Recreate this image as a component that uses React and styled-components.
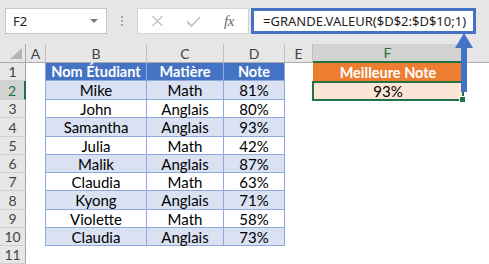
import React from "react";
import styled, { createGlobalStyle } from "styled-components";

const GlobalStyle = createGlobalStyle`
  html, body { margin: 0; padding: 0; background: #fff; }
  body { overflow: hidden; }
`;

const GREEN = "#217346";
const BLUE = "#4472c4";
const GRID_BLUE = "#8ea9db";

const Page = styled.div`
  position: relative;
  width: 489px;
  height: 264px;
  overflow: hidden;
  display: flex;
  flex-direction: column;
  background: #fff;
`;

/* ---------- formula bar ---------- */

const FormulaBar = styled.div`
  flex: none;
  box-sizing: border-box;
  height: 44px;
  background: #e6e6e6;
  display: flex;
  align-items: flex-start;
  padding: 8px 0 0 5px;
  font-family: "Noto Sans", sans-serif;
`;

const NameBox = styled.div`
  box-sizing: border-box;
  width: 102px;
  height: 26px;
  background: #fff;
  border: 1px solid #c6c6c6;
  display: flex;
  align-items: center;
  justify-content: space-between;
  padding: 0 8px 0 7px;
  font-size: 13px;
  color: #222;
`;

const Caret = styled.span`
  width: 0;
  height: 0;
  border-left: 4px solid transparent;
  border-right: 4px solid transparent;
  border-top: 4px solid #7a7a7a;
`;

const Grip = styled.div`
  width: 30px;
  height: 26px;
  display: flex;
  flex-direction: column;
  align-items: center;
  justify-content: center;
  gap: 2px;
`;

const GripDot = styled.span`
  width: 2px;
  height: 2px;
  background: #a8a8a8;
`;

const FnBox = styled.div`
  box-sizing: border-box;
  width: 112px;
  height: 26px;
  background: #fff;
  border: 1px solid #d4d4d4;
  display: flex;
  align-items: center;
  padding-left: 1px;
`;

const FnSlot = styled.div`
  width: 36px;
  height: 24px;
  display: flex;
  align-items: center;
  justify-content: center;
  color: ${(p) => p.$tint};
`;

const FxLabel = styled.span`
  font-family: "Liberation Serif", serif;
  font-style: italic;
  font-size: 15px;
  letter-spacing: -0.5px;
  color: #6a6a6a;
`;

const FormulaInput = styled.div`
  box-sizing: border-box;
  margin-left: 2px;
  width: 225px;
  height: 26px;
  background: #fff;
  border: 3px solid ${BLUE};
  display: flex;
  align-items: center;
  padding-left: 9px;
  font-size: 13px;
  color: #1e1e1e;
  white-space: nowrap;
`;

/* ---------- sheet grid ---------- */

const Sheet = styled.div`
  display: grid;
  grid-template-columns: 26px 20px 101px 77px 61px 28px 150px 64px;
  grid-template-rows: 19px 18px 19px 18px 19px 18px 18px 18px 19px 18px 18px 18px;
  font-family: "Lato", "Liberation Sans", sans-serif;
  font-size: 15px;
`;

const HeadBase = styled.div`
  box-sizing: border-box;
  display: flex;
  align-items: center;
  justify-content: center;
  background: ${(p) => (p.$active ? "#d2d2d2" : "#e6e6e6")};
  color: ${(p) => (p.$active ? GREEN : "#444")};
  font-size: 14px;
`;

const Corner = styled(HeadBase)`
  position: relative;
  border-right: 1px solid #ababab;
  border-bottom: 1px solid #ababab;
  &::after {
    content: "";
    position: absolute;
    right: 3px;
    bottom: 3px;
    width: 0;
    height: 0;
    border-left: 12px solid transparent;
    border-bottom: 11px solid #b5b5b5;
  }
`;

const ColHead = styled(HeadBase)`
  border-right: 1px solid #c0c0c0;
  border-bottom: ${(p) => (p.$active ? `2px solid ${GREEN}` : "1px solid #ababab")};
`;

const RowHead = styled(HeadBase)`
  border-right: ${(p) => (p.$active ? `2px solid ${GREEN}` : "1px solid #ababab")};
  border-bottom: 1px solid #d0d0d0;
`;

const Blank = styled.div`
  box-sizing: border-box;
  background: #fff;
  border-right: ${(p) => (p.$edge ? `1px solid ${GRID_BLUE}` : "none")};
`;

const TONES = {
  head: { bg: BLUE, fg: "#fff", weight: 700, size: "14.5px" },
  band: { bg: "#d9e1f2", fg: "#000", weight: 400, size: "15px" },
  plain: { bg: "#fff", fg: "#000", weight: 400, size: "15px" },
};

const TableCell = styled.div`
  box-sizing: border-box;
  display: flex;
  align-items: center;
  justify-content: center;
  white-space: nowrap;
  background: ${(p) => TONES[p.$tone].bg};
  color: ${(p) => TONES[p.$tone].fg};
  font-weight: ${(p) => TONES[p.$tone].weight};
  font-size: ${(p) => TONES[p.$tone].size};
  border-right: 1px solid ${GRID_BLUE};
  border-bottom: 1px solid ${GRID_BLUE};
`;

const AccentCell = styled.div`
  box-sizing: border-box;
  display: flex;
  align-items: center;
  justify-content: center;
  background: #ed7d31;
  color: #fff;
  font-weight: 700;
  font-size: 14.5px;
`;

const ResultCell = styled.div`
  position: relative;
  box-sizing: border-box;
  display: flex;
  align-items: center;
  justify-content: center;
  background: #fce4d6;
  color: #000;
  border: 2px solid ${GREEN};
  margin: 0 -1px -1px -1px;
`;

const FillHandle = styled.span`
  position: absolute;
  right: -4px;
  bottom: -4px;
  width: 5px;
  height: 5px;
  background: ${GREEN};
  border: 1px solid #fff;
`;

const ArrowMark = styled.svg`
  position: absolute;
  left: 454px;
  top: 33px;
`;

const students = [
  ["Mike", "Math", "81%"],
  ["John", "Anglais", "80%"],
  ["Samantha", "Anglais", "93%"],
  ["Julia", "Math", "42%"],
  ["Malik", "Anglais", "87%"],
  ["Claudia", "Math", "63%"],
  ["Kyong", "Anglais", "71%"],
  ["Violette", "Math", "58%"],
  ["Claudia", "Anglais", "73%"],
];

/* the last header has no letter: its column runs past the window edge */
const columns = ["A", "B", "C", "D", "E", "F", ""];

function SheetRow({ index }) {
  const tableRow = index >= 1 && index <= 10;
  const cells = [];
  cells.push(
    <RowHead key="h" $active={index === 2}>
      {index}
    </RowHead>
  );
  cells.push(<Blank key="a" $edge={tableRow} />);

  if (index === 1) {
    ["Nom Étudiant", "Matière", "Note"].forEach((t) =>
      cells.push(
        <TableCell key={t} $tone="head">
          {t}
        </TableCell>
      )
    );
  } else if (tableRow) {
    const tone = index % 2 === 0 ? "band" : "plain";
    students[index - 2].forEach((t, i) =>
      cells.push(
        <TableCell key={i} $tone={tone}>
          {t}
        </TableCell>
      )
    );
  } else {
    cells.push(<Blank key="b" />, <Blank key="c" />, <Blank key="d" />);
  }

  cells.push(<Blank key="e" />);
  if (index === 1) cells.push(<AccentCell key="f">Meilleure Note</AccentCell>);
  else if (index === 2)
    cells.push(
      <ResultCell key="f">
        93%
        <FillHandle />
      </ResultCell>
    );
  else cells.push(<Blank key="f" />);
  cells.push(<Blank key="g" />);
  return cells;
}

export default function App() {
  return (
    <>
      <GlobalStyle />
      <Page>
        <FormulaBar>
          <NameBox>
            F2
            <Caret />
          </NameBox>
          <Grip>
            <GripDot />
            <GripDot />
            <GripDot />
          </Grip>
          <FnBox>
            <FnSlot $tint="#c4c4c4">
              <svg width="13" height="12" viewBox="0 0 13 12">
                <path d="M1.5 1 L11.5 11 M11.5 1 L1.5 11" stroke="currentColor" strokeWidth="1.4" fill="none" />
              </svg>
            </FnSlot>
            <FnSlot $tint="#c4c4c4">
              <svg width="15" height="11" viewBox="0 0 15 11">
                <path d="M1 5.5 L5.5 10 L14 1" stroke="currentColor" strokeWidth="1.8" fill="none" />
              </svg>
            </FnSlot>
            <FnSlot>
              <FxLabel>fx</FxLabel>
            </FnSlot>
          </FnBox>
          <FormulaInput>=GRANDE.VALEUR($D$2:$D$10;1)</FormulaInput>
        </FormulaBar>

        <Sheet>
          <Corner />
          {columns.map((c, i) => (
            <ColHead key={i} $active={c === "F"}>
              {c}
            </ColHead>
          ))}
          {Array.from({ length: 11 }, (_, i) => (
            <SheetRow key={i} index={i + 1} />
          ))}
        </Sheet>

        <ArrowMark width="20" height="60" viewBox="0 0 20 60">
          <polygon points="10,0 19,15 1,15" fill={BLUE} />
          <rect x="7" y="14" width="6" height="45" fill={BLUE} />
        </ArrowMark>
      </Page>
    </>
  );
}
